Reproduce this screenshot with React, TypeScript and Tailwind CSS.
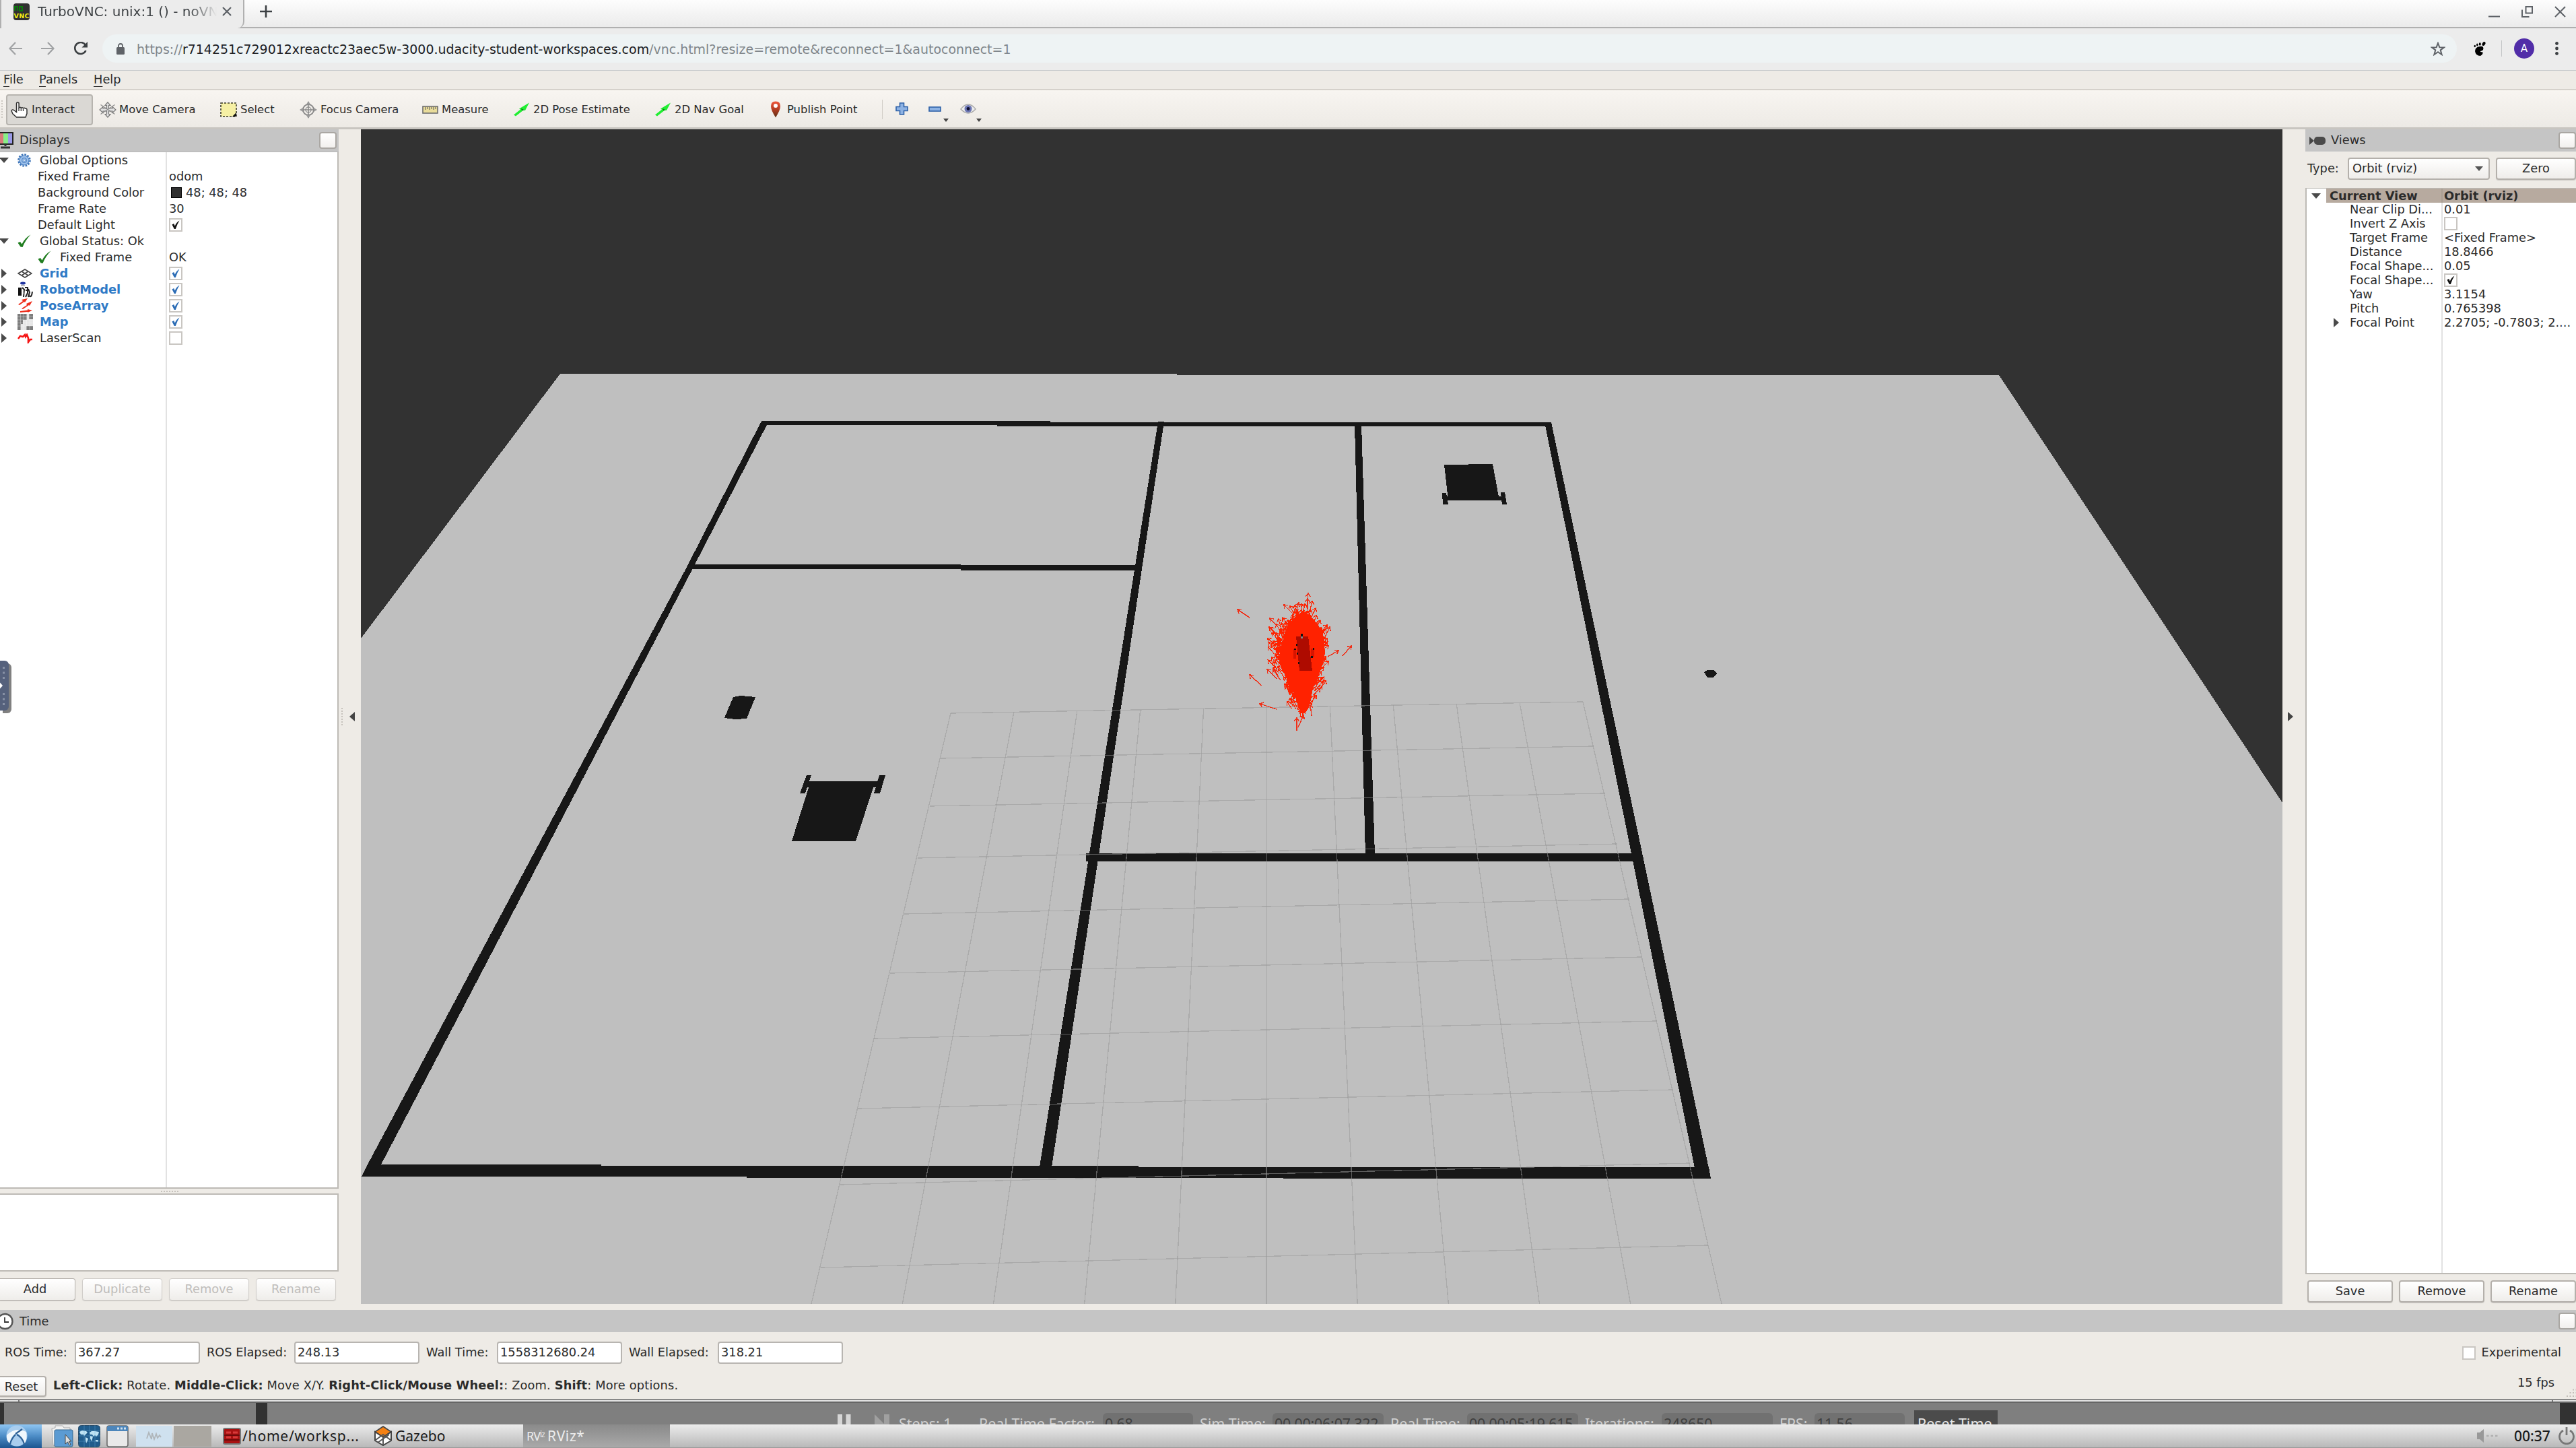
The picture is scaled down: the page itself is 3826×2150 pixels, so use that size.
import React from "react";

const BTN =
  "flex items-center justify-center rounded-[4px] border border-[#b4b0ab] bg-gradient-to-b from-white to-[#efedea] shadow-[0_1px_1px_rgba(0,0,0,0.15)] shrink-0";

/* ---------- small drawings ---------- */

const Check = ({ color = "#111" }: { color?: string }) => (
  <svg width="12" height="14" viewBox="0 0 12 14">
    <path d="M0.5 6.5 L3.2 5 L4.8 8.5 Q7 3 11.5 0.5 Q8 6 5.8 13 L3.8 13 Z" fill={color} />
  </svg>
);

const Box = ({ checked, color }: { checked?: boolean; color?: string }) => (
  <span className="flex h-5 w-5 shrink-0 items-center justify-center border-2 border-[#c9c6c2] bg-white">
    {checked && <Check color={color} />}
  </span>
);

const Down = () => (
  <svg width="14" height="8" viewBox="0 0 14 8">
    <path d="M0 0H14L7 8Z" fill="#4a4a4a" />
  </svg>
);

const Right = () => (
  <svg width="8" height="14" viewBox="0 0 8 14">
    <path d="M0 0L8 7L0 14Z" fill="#4a4a4a" />
  </svg>
);

const GreenCheck = () => (
  <svg width="20" height="20" viewBox="0 0 20 20">
    <path d="M0.5 12.5 L4 11 L6.5 14.5 Q11 5 19.5 0.5 Q12 8 7.5 19 L4.5 18.5 Z" fill="#1f7d1f" />
  </svg>
);

const Gear = () => (
  <svg width="20" height="20" viewBox="0 0 20 20">
    <circle cx="10" cy="10" r="8.6" fill="none" stroke="#3c74b8" strokeWidth="2.4" strokeDasharray="2.7 1.8" />
    <circle cx="10" cy="10" r="7" fill="#9cc0ea" stroke="#4a80c4" strokeWidth="1.2" />
    <circle cx="10" cy="10" r="3.4" fill="none" stroke="#5a8bc8" strokeWidth="1.2" />
    <circle cx="10" cy="10" r="1.6" fill="#dbe8f7" stroke="#5a8bc8" strokeWidth="0.6" />
  </svg>
);

const GridIcon = () => (
  <svg width="22" height="14" viewBox="0 0 22 14">
    <path d="M1 7L11 1L21 7L11 13ZM6 4L16 10M16 4L6 10" fill="none" stroke="#444" strokeWidth="1.6" />
  </svg>
);

const RobotIcon = () => (
  <svg width="24" height="24" viewBox="0 0 24 24">
    <ellipse cx="8" cy="2.5" rx="4" ry="2" fill="#2034a0" />
    <path d="M5 5h6v2H5z" fill="#bbb" />
    <path d="M1 9h5v12H1z" fill="#111" />
    <path d="M7 9l3 3-1 11M11 9h4v8l-3 6M16 11l2 5-2 7M12 13h4M17 21q4 4 5-6" fill="none" stroke="#222" strokeWidth="2" />
    <path d="M8 14h2v5H8z" fill="#888" />
  </svg>
);

const PoseIcon = () => (
  <svg width="23" height="22" viewBox="0 0 23 22">
    <path d="M1 9L8 4L6 2L15 0L11 6L10 5L3 10Z M6 15L14 10L13 8L22 4L18 11L17 10L8 16Z M4 19L15 17.5V16L22 18L15 21V20L4 21Z" fill="#ee2e1c" />
  </svg>
);

const MapIcon = () => (
  <svg width="23" height="24" viewBox="0 0 23 24">
    <path d="M0 0H23V24H0Z" fill="#e6e6e6" />
    <path d="M0 0H14V9H8V15H5V24H0ZM17 0H23V8H17ZM13 18H23V24H13Z" fill="#7d7d7d" />
    <path d="M4.5 0V24M9 0V24M13.500 0V24M18 0V24M0 4.500H23M0 9H23M0 13.500H23M0 18H23" stroke="#fff" strokeOpacity="0.35" />
  </svg>
);

const LaserIcon = () => (
  <svg width="23" height="15" viewBox="0 0 23 15">
    <path d="M1 8L4 4L8 5L11 2L12 5L14 2L16 7V13L19 9H22" fill="none" stroke="#f51414" strokeWidth="2.6" />
  </svg>
);

const HandIcon = () => (
  <svg width="26" height="24" viewBox="0 0 26 24">
    <path d="M8.500 13V3q0-2 1.800-2t1.800 2v6q2-1.500 3.200.3 2-1.500 3.200.4 2-1 3 .4 2.500-.5 2.500 2v5.500l-2 5.400H8.500L3 18l-2-4.500q1-2.500 3.500-1l4 3z" fill="#fff" stroke="#333" strokeWidth="1.500" />
    <path d="M12 9v5M15.300 10v4M18.500 10.500v3.500" stroke="#333" strokeWidth="1.300" />
  </svg>
);

const MoveIcon = () => (
  <svg width="26" height="24" viewBox="0 0 26 24">
    <path d="M13 0.800L17 5.500H14.500V10H20V7.500L25 12L20 16.500V14H14.500V18.500H17L13 23.200L9 18.500H11.500V14H6V16.500L1 12L6 7.500V10H11.500V5.500H9Z" fill="#e2e2e2" stroke="#777" strokeWidth="1.200" />
    <path d="M2.500 4.500L23.500 18.500M23.500 4.500L2.500 18.500" stroke="#8a8a8a" strokeWidth="1.200" />
  </svg>
);

const SelectIcon = () => (
  <svg width="25" height="22" viewBox="0 0 25 22">
    <rect x="1" y="1" width="23" height="20" fill="#f6f0a4" stroke="#3b3b2a" strokeWidth="1.600" strokeDasharray="3 2" />
    <path d="M24 15V21H18Z" fill="#111" />
  </svg>
);

const FocusIcon = () => (
  <svg width="26" height="26" viewBox="0 0 26 26">
    <circle cx="13" cy="13" r="8" fill="none" stroke="#888" strokeWidth="2" />
    <circle cx="13" cy="13" r="4" fill="none" stroke="#999" strokeWidth="1.500" />
    <path d="M13 1V25M1 13H25" stroke="#888" strokeWidth="1.500" />
    <path d="M13 0l3 5h-6zM13 26l3-5h-6zM0 13l5-3v6zM26 13l-5-3v6z" fill="#999" />
  </svg>
);

const RulerIcon = () => (
  <svg width="24" height="12" viewBox="0 0 24 12">
    <rect x="1" y="1" width="22" height="10" fill="#e9dc9a" stroke="#6d6d6d" strokeWidth="1.600" />
    <path d="M5 2v4M8 2v3M11 2v4M14 2v3M17 2v4M20 2v3" stroke="#555" />
  </svg>
);

const GreenArrow = () => (
  <svg width="25" height="21" viewBox="0 0 25 21">
    <path d="M1 18.500L11 10.500L9 9.500L24 0.500L18 12L15.500 11.500L4 20.500Z" fill="#22ee33" />
    <path d="M12 9l5 2.500-4 .5z" fill="#0a7a14" />
  </svg>
);

const PinIcon = () => (
  <svg width="16" height="25" viewBox="0 0 16 25">
    <defs>
      <linearGradient id="pin" x1="0" y1="0" x2="0" y2="1">
        <stop offset="0" stopColor="#f0553a" />
        <stop offset="0.5" stopColor="#b33c22" />
        <stop offset="1" stopColor="#5b2f14" />
      </linearGradient>
    </defs>
    <path d="M8 0.500Q15 0.500 15 7.500Q15 13.500 8 24.500Q1 13.500 1 7.500Q1 0.500 8 0.500Z" fill="url(#pin)" />
    <circle cx="8" cy="7" r="3" fill="#fff" />
  </svg>
);

/* ---------- 3D scene ---------- */

const random = (seed: number) => {
  let s = seed;
  return () => {
    s = (s * 1664525 + 1013904223) % 4294967296;
    return s / 4294967296;
  };
};

const arrow = (x1: number, y1: number, x2: number, y2: number) => {
  const a = Math.atan2(y2 - y1, x2 - x1);
  const h = 6;
  const p = (d: number) =>
    `${(x2 - h * Math.cos(a + d)).toFixed(1)} ${(y2 - h * Math.sin(a + d)).toFixed(1)}`;
  return `M${x1.toFixed(1)} ${y1.toFixed(1)}L${x2.toFixed(1)} ${y2.toFixed(1)}M${p(0.65)}L${x2.toFixed(1)} ${y2.toFixed(1)}L${p(-0.65)}`;
};

const particles = (() => {
  const r = random(29);
  let d = "";
  for (let i = 0; i < 330; i++) {
    const t = r() * Math.PI * 2;
    const k = 0.6 + r() * r() * 0.6;
    const sx = Math.cos(t);
    const sy = Math.sin(t);
    const squeeze = sy > 0 ? 1 - 0.66 * Math.pow(sy, 1.5) : 1 - 0.35 * Math.pow(-sy, 3);
    const x = 1933 + sx * (sx < 0 ? 37 : 32) * k * squeeze;
    const y = 972 + (sy > 0 ? sy * 94 : sy * 66) * k;
    const lean = sx * 0.7 + (r() - 0.5) * 0.6;
    const len = 11 + r() * 9;
    d += arrow(x, y + 6, x + Math.sin(lean) * len, y + 6 - Math.cos(lean) * len);
  }
  return d;
})();

const strays = [
  [1856, 917, 1838, 905],
  [1874, 1018, 1856, 1002],
  [1896, 1053, 1871, 1045],
  [1994, 974, 2007, 959],
  [1897, 1008, 1882, 994],
  [1902, 1010, 1891, 994],
  [1926, 1085, 1926, 1066],
  [1928, 1080, 1936, 1062],
  [1921, 912, 1907, 898],
  [1941, 900, 1943, 881],
  [1942, 905, 1942, 889],
  [1925, 908, 1929, 895],
  [1898, 931, 1886, 918],
  [1900, 945, 1887, 932],
  [1972, 975, 1988, 966],
  [1968, 946, 1975, 931],
  [1950, 1032, 1961, 1022],
  [1948, 1063, 1946, 1046],
]
  .map(([a, b, c, d]) => arrow(a, b, c, d))
  .join("");

const gridLeft = [
  [1412, 1059], [1397, 1126], [1381, 1197], [1363, 1274], [1343, 1357],
  [1322, 1445], [1298, 1542], [1274, 1646], [1248, 1759], [1219, 1882],
];
const gridRight = [
  [2351, 1042], [2367, 1108], [2384, 1178], [2402, 1253], [2420, 1335],
  [2438, 1421], [2461, 1516], [2485, 1618], [2510, 1727], [2537, 1849],
];

const Scene = () => (
  <svg
    className="block shrink-0 bg-[#323232]"
    width="2854"
    height="1744"
    viewBox="536 192 2854 1744"
    shapeRendering="crispEdges"
  >
    <path d="M832 555H1748V557H2969L3390 1192V1936H536V948Z" fill="#bfbfbf" />
    <g fill="#171717">
      <path d="M1131 625H1560V627H2304V633H1481V631H1131Z" />
      <path d="M1130 627H1141L1030 842L565 1731L556 1747H537L546 1729L1020 842Z" />
      <path d="M546 1729H893V1731H1691V1733H2538L2541 1750H1906V1749H1109V1747H537Z" />
      <path d="M2294 627H2304L2541 1749H2520Z" />
      <path d="M1720 626H1729L1562 1733H1544Z" />
      <path d="M2012 630H2022L2042 1270H2028Z" />
      <path d="M1023 838H1427V839H1690V847H1427V845H1023Z" />
      <path d="M1613 1267H2436V1279H1613Z" />
      <path d="M2145 690L2217 689L2227 743H2151Z" />
      <path d="M2142 732H2148L2151 749H2143ZM2229 731H2235L2238 749H2231ZM2145 737H2236V743H2145Z" />
      <path d="M1204 1160H1300L1271 1249H1176Z" />
      <path d="M1198 1151H1205L1196 1178H1188ZM1306 1151H1315L1307 1178H1298ZM1200 1160H1308L1305 1169H1197Z" />
      <path d="M1089 1035L1100 1033L1122 1035L1109 1067L1092 1068L1076 1066Z" />
      <path d="M2531 998L2536 995L2546 995L2550 1000L2545 1006L2536 1006Z" />
    </g>
    <g stroke="#999" strokeOpacity="0.55" strokeWidth="1.3" fill="none">
      {gridLeft.map(([x, y], i) => (
        <path key={i} d={`M${x} ${y}L${gridRight[i][0]} ${gridRight[i][1]}`} />
      ))}
      {Array.from({ length: 11 }, (_, i) => (
        <path key={i} d={`M${1412 + 93.9 * i} ${1059 - 1.7 * i}L${1205 + 135.2 * i} 1936`} />
      ))}
    </g>
    <path
      d="M1935 908L1947 915L1957 927L1965 940L1967 957L1968 970L1964 987L1958 1003L1950 1020L1947 1040L1940 1057L1934 1060L1928 1050L1924 1033L1915 1020L1910 1006L1903 990L1900 976L1904 955L1910 935L1922 917Z"
      fill="#ff2200"
    />
    <path d={particles} stroke="#ff2200" strokeWidth="1.2" fill="none" />
    <path d={strays} stroke="#f03018" strokeWidth="1.4" fill="none" />
    <path d="M1925 945H1943L1949 996H1930Z" fill="#ae0b00" />
    <path d="M1921 964h4v14h-4zM1947 963h5v13h-5z" fill="#d81400" />
    <path d="M1932 941h3v6h-3zM1925 956h2v3h-2zM1926 969h2v3h-2zM1928 983h2v3h-2zM1922 963h3v2h-3zM1950 962h2v3h-2zM1947 974h3v3h-3z" fill="#111" />
    <path d="M1932 945h3v3h-3z" fill="#888" />
  </svg>
);

/* ---------- browser ---------- */

const Browser = () => (
  <header className="shrink-0">
    <div className="flex h-[42px] items-stretch border-b-2 border-[#b0b0b0] bg-gradient-to-b from-[#fdfdfd] to-[#ebebeb]">
      <div className="relative -mb-[2px] flex w-[363px] shrink-0 items-center rounded-br-[10px] border-x-2 border-[#b0b0b0] bg-[#ececec] pl-[18px]">
        <svg width="24" height="25" viewBox="0 0 24 25" className="mb-2">
          <rect width="24" height="25" rx="4" fill="#303030" />
          <path d="M2 11V5H6V11M9 5H13V11H9Z" fill="none" stroke="#0a7a0a" strokeWidth="2" />
          <text x="0.500" y="22" fontFamily="DejaVu Sans" fontWeight="700" fontSize="9.500" fill="#f4f010" textLength="23">VNC</text>
        </svg>
        <span className="mb-2 ml-3 w-[266px] overflow-hidden bg-gradient-to-r from-[#3c4043] from-85% to-transparent bg-clip-text whitespace-nowrap text-[20px] leading-7 text-transparent">
          TurboVNC: unix:1 () - noVNC
        </span>
        <svg width="14" height="14" viewBox="0 0 14 14" className="mb-2 ml-2">
          <path d="M1 1L13 13M13 1L1 13" stroke="#5f6368" strokeWidth="2.200" />
        </svg>
      </div>
      <svg width="18" height="18" viewBox="0 0 18 18" className="mt-[8px] ml-[23px]">
        <path d="M9 0V18M0 9H18" stroke="#3c4043" strokeWidth="2.600" />
      </svg>
      <div className="ml-auto flex items-center gap-[32px] pr-[15px] pb-[6px]">
        <svg width="17" height="17" viewBox="0 0 17 17"><path d="M0 15.500H17" stroke="#5f6368" strokeWidth="2" /></svg>
        <svg width="17" height="17" viewBox="0 0 17 17">
          <path d="M6.500 1H16V10.500H6.500ZM1 5.500V16H11.500" fill="none" stroke="#5f6368" strokeWidth="2" />
        </svg>
        <svg width="17" height="17" viewBox="0 0 17 17"><path d="M1 1L16 16M16 1L1 16" stroke="#5f6368" strokeWidth="2" /></svg>
      </div>
    </div>
    <div className="flex h-[63px] items-center border-b border-[#c6c9cb] bg-[#ececec] pb-[2px]">
      <svg width="20" height="20" viewBox="0 0 20 20" className="ml-[13px]">
        <path d="M20 10H2M10 1L1.500 10L10 19" fill="none" stroke="#a0a2a4" strokeWidth="2.200" />
      </svg>
      <svg width="20" height="20" viewBox="0 0 20 20" className="ml-[28px]">
        <path d="M0 10H18M10 1L18.500 10L10 19" fill="none" stroke="#a0a2a4" strokeWidth="2.200" />
      </svg>
      <svg width="22" height="20" viewBox="0 0 22 20" className="ml-[28px]">
        <path d="M18 5A8.500 8.500 0 1 0 18.500 13" fill="none" stroke="#3c4043" strokeWidth="2.600" />
        <path d="M21 0V8.500H12.500Z" fill="#3c4043" />
      </svg>
      <div className="ml-[21px] flex h-[42px] w-[3497px] items-center rounded-full bg-[#eef3f4] pr-[17px] pl-[21px]">
        <svg width="12" height="17" viewBox="0 0 12 17">
          <rect y="6" width="12" height="11" rx="1.500" fill="#5f6368" />
          <path d="M3 7V4a3 3 0 0 1 6 0V7" fill="none" stroke="#5f6368" strokeWidth="1.800" />
        </svg>
        <span className="mt-[2px] ml-[18px] text-[18.97px] leading-6 whitespace-nowrap text-[#80868b]">
          https://<span className="text-[#202124]">r714251c729012xreactc23aec5w-3000.udacity-student-workspaces.com</span>/vnc.html?resize=remote&amp;reconnect=1&amp;autoconnect=1
        </span>
        <svg width="22" height="21" viewBox="0 0 22 21" className="ml-auto">
          <path d="M11 2L13.300 8.200L20 8.400L14.700 12.400L16.600 19L11 15.200L5.400 19L7.300 12.400L2 8.400L8.700 8.200Z" fill="none" stroke="#5f6368" strokeWidth="2" />
        </svg>
      </div>
      <svg width="18" height="21" viewBox="0 0 18 21" className="ml-[25px]">
        <path d="M14 8Q16 13 10 14Q10 16 13 15Q15 18 10 21Q3 21 2 14Q2 8 9 7Q13 6 14 8Z" fill="#000" />
        <ellipse cx="15" cy="3" rx="2.200" ry="3.200" transform="rotate(30 15 3)" />
        <ellipse cx="9.300" cy="3.400" rx="1.500" ry="2.200" />
        <ellipse cx="5.300" cy="4.500" rx="1.200" ry="2" />
        <ellipse cx="1.800" cy="6.500" rx="1.200" ry="1.800" />
      </svg>
      <div className="ml-[23px] h-6 w-px bg-[#c4c6c8]" />
      <div className="ml-[18px] flex h-[30px] w-[30px] items-center justify-center rounded-full bg-[#512da8] font-['Roboto'] text-[16px] text-white">A</div>
      <svg width="5" height="20" viewBox="0 0 5 20" className="ml-[31px]">
        <circle cx="2.500" cy="2.500" r="2.400" fill="#3c4043" />
        <circle cx="2.500" cy="10" r="2.400" fill="#3c4043" />
        <circle cx="2.500" cy="17.500" r="2.400" fill="#3c4043" />
      </svg>
    </div>
  </header>
);

/* ---------- RViz window ---------- */

const MenuBar = () => (
  <nav className="flex h-[29px] shrink-0 items-start border-b-2 border-[#d5d1cb] pt-[2px] pl-[5px] text-[17.8px] leading-[22px]">
    {[["F", "ile", "w-[53px]"], ["P", "anels", "w-[81px]"], ["H", "elp", "w-[60px]"]].map(([a, b, w]) => (
      <span key={a} className={w}>
        <u className="underline-offset-4">{a}</u>{b}
      </span>
    ))}
  </nav>
);

const tools: { icon: React.ReactNode; label: string; w: string; tw: string }[] = [
  { icon: <MoveIcon />, label: "Move Camera", w: "w-[180px]", tw: "w-[30px]" },
  { icon: <SelectIcon />, label: "Select", w: "w-[118px]", tw: "w-[30px]" },
  { icon: <FocusIcon />, label: "Focus Camera", w: "w-[182px]", tw: "w-[31px]" },
  { icon: <RulerIcon />, label: "Measure", w: "w-[135px]", tw: "w-[29px]" },
  { icon: <GreenArrow />, label: "2D Pose Estimate", w: "w-[210px]", tw: "w-[30px]" },
  { icon: <GreenArrow />, label: "2D Nav Goal", w: "w-[172px]", tw: "w-[30px]" },
  { icon: <PinIcon />, label: "Publish Point", w: "w-[166px]", tw: "w-[25px]" },
];

const MiniDown = () => (
  <svg width="8" height="5" viewBox="0 0 8 5" className="mt-[31px]">
    <path d="M0 0H8L4 5Z" fill="#444" />
  </svg>
);

const ToolBar = () => (
  <div className="flex h-[58px] shrink-0 items-start border-b-[3px] border-[#c8c5c0] bg-gradient-to-b from-[#f8f5f1] to-[#edeae5] text-[16.4px]">
    <div className="mt-[15px] ml-[2px] h-[26px] border-l-2 border-dotted border-[#ccc8c2]" />
    <div className="mt-[6px] ml-[5px] mr-[9px] flex h-[46px] w-[129px] items-center rounded-[4px] border-2 border-[#b7b4af] bg-[#dad8d4] pl-[5px]">
      <HandIcon />
      <span className="ml-[5px]">Interact</span>
    </div>
    {tools.map((t) => (
      <div key={t.label} className={`flex h-[57px] shrink-0 items-center whitespace-nowrap ${t.w}`}>
        <span className={`shrink-0 ${t.tw}`}>{t.icon}</span>
        {t.label}
      </div>
    ))}
    <div className="mt-[14px] h-[29px] w-px bg-[#d0ccc6]" />
    <svg width="19" height="19" viewBox="0 0 19 19" className="mt-[18px] ml-[19px]">
      <path d="M6.500 1H12.500V6.500H18V12.500H12.500V18H6.500V12.500H1V6.500H6.500Z" fill="#8db2e3" stroke="#2f62a8" strokeWidth="1.600" />
    </svg>
    <svg width="19" height="8" viewBox="0 0 19 8" className="mt-[24px] ml-[30px]">
      <rect x="1" y="1" width="17" height="6" fill="#8db2e3" stroke="#2f62a8" strokeWidth="1.600" />
    </svg>
    <div className="mt-[11px] ml-[3px]"><MiniDown /></div>
    <svg width="24" height="16" viewBox="0 0 24 16" className="mt-[20px] ml-[17px]">
      <path d="M1 8Q12 -6 23 8Q12 20 1 8Z" fill="#eee" stroke="#aaa" strokeWidth="1.500" />
      <circle cx="12" cy="7.500" r="5.500" fill="#6c76b4" />
      <circle cx="12" cy="7.500" r="2.400" fill="#0c0c2c" />
    </svg>
    <div className="mt-[11px]"><MiniDown /></div>
  </div>
);

const FloatBtn = () => (
  <div className="h-[25px] w-[26px] shrink-0 rounded-[4px] border-2 border-[#aaa7a3] bg-gradient-to-b from-white to-[#f2f0ee]" />
);

type Row = {
  open?: boolean;
  closed?: boolean;
  icon?: React.ReactNode;
  indent: string;
  label: string;
  bold?: boolean;
  value?: React.ReactNode;
};

const blue = <Box checked color="#2b6cb5" />;
const rows: Row[] = [
  { open: true, icon: <Gear />, indent: "w-[33px]", label: "Global Options" },
  { indent: "w-[30px]", label: "Fixed Frame", value: "odom" },
  {
    indent: "w-[30px]",
    label: "Background Color",
    value: (
      <span className="flex items-center">
        <span className="mr-[6px] ml-[3px] h-4 w-4 border border-black bg-[#303030]" />48; 48; 48
      </span>
    ),
  },
  { indent: "w-[30px]", label: "Frame Rate", value: "30" },
  { indent: "w-[30px]", label: "Default Light", value: <Box checked /> },
  { open: true, icon: <GreenCheck />, indent: "w-[33px]", label: "Global Status: Ok" },
  { icon: <span className="block pl-[30px]"><GreenCheck /></span>, indent: "w-[63px]", label: "Fixed Frame", value: "OK" },
  { closed: true, icon: <GridIcon />, indent: "w-[33px]", label: "Grid", bold: true, value: blue },
  { closed: true, icon: <RobotIcon />, indent: "w-[33px]", label: "RobotModel", bold: true, value: blue },
  { closed: true, icon: <PoseIcon />, indent: "w-[33px]", label: "PoseArray", bold: true, value: blue },
  { closed: true, icon: <MapIcon />, indent: "w-[33px]", label: "Map", bold: true, value: blue },
  { closed: true, icon: <LaserIcon />, indent: "w-[33px]", label: "LaserScan", value: <Box /> },
];

const Displays = () => (
  <aside className="flex w-[503px] shrink-0 flex-col">
    <div className="flex h-[34px] items-center border-b border-[#b8b8b8] bg-[#c5c5c5] pr-[3px]">
      <svg width="20" height="25" viewBox="0 0 20 25">
        <path d="M0 1H19V18H0" fill="#8e8" stroke="#222" strokeWidth="2" />
        <path d="M0 2H5V17H0Z" fill="#d87a7a" />
        <path d="M12 2H18V17H12Z" fill="#9a9ae8" />
        <path d="M8 18v3M1 23h14" stroke="#333" strokeWidth="3" />
      </svg>
      <span className="ml-[9px] flex-1 pb-px">Displays</span>
      <FloatBtn />
    </div>
    <div className="flex h-[1539px] border-r-2 border-b-2 border-[#bdbab5] bg-white">
      <div className="w-[248px] shrink-0 border-r-2 border-[#e2e2e2]">
        {rows.map((r, i) => (
          <div key={i} className="flex h-6 items-center whitespace-nowrap">
            <span className="w-[26px] shrink-0 overflow-hidden">
              {r.open && <span className="-ml-px block"><Down /></span>}
              {r.closed && <span className="block pl-[2px]"><Right /></span>}
            </span>
            <span className={`shrink-0 ${r.indent}`}>{r.icon}</span>
            <span className={r.bold ? "font-bold text-[#2f7ac6]" : ""}>{r.label}</span>
          </div>
        ))}
      </div>
      <div className="pl-[3px]">
        {rows.map((r, i) => (
          <div key={i} className="flex h-6 items-center whitespace-nowrap">{r.value}</div>
        ))}
      </div>
    </div>
    <div className="flex h-[7px] items-center justify-center">
      <div className="w-[26px] border-t-2 border-dotted border-[#c6c2bc]" />
    </div>
    <div className="h-[116px] border-y-2 border-r-2 border-[#bdbab5] bg-white" />
    <div className="mt-[10px] flex gap-[10px]">
      <div className={`${BTN} h-[33px] w-[112px] rounded-l-none border-l-0 pr-[7px] pb-[2px]`}>Add</div>
      {["Duplicate", "Remove", "Rename"].map((t) => (
        <div key={t} className={`${BTN} h-[33px] w-[119px] border-[#d0cdc9] pb-[2px] text-[#bfbdbb]`}>{t}</div>
      ))}
    </div>
  </aside>
);

const Splitter = ({ dir }: { dir: "left" | "right" }) => (
  <div className={`flex shrink-0 items-center ${dir === "left" ? "w-[33px] pl-[4px]" : "w-[34px] pl-[8px]"}`}>
    {dir === "left" && <div className="mr-[10px] h-[26px] border-l-2 border-dotted border-[#c6c2bc]" />}
    <svg width="8" height="14" viewBox="0 0 8 14">
      <path d={dir === "left" ? "M8 0V14L0 7Z" : "M0 0V14L8 7Z"} fill="#444" />
    </svg>
  </div>
);

const viewRows: [string, React.ReactNode][] = [
  ["Near Clip Di...", "0.01"],
  ["Invert Z Axis", <Box />],
  ["Target Frame", "<Fixed Frame>"],
  ["Distance", "18.8466"],
  ["Focal Shape...", "0.05"],
  ["Focal Shape...", <Box checked />],
  ["Yaw", "3.1154"],
  ["Pitch", "0.765398"],
  ["Focal Point", "2.2705; -0.7803; 2...."],
];

const Views = () => (
  <aside className="flex w-[402px] shrink-0 flex-col overflow-hidden">
    <div className="flex h-[33px] shrink-0 items-center bg-[#c5c5c5] pl-[6px]">
      <svg width="24" height="14" viewBox="0 0 24 14">
        <path d="M0 1L7 7L0 13Z" fill="#444" />
        <rect x="7" y="1" width="17" height="12" rx="5" fill="#4a4a4a" />
      </svg>
      <span className="ml-[8px] flex-1 pb-px">Views</span>
      <FloatBtn />
    </div>
    <div className="mt-[9px] flex shrink-0 items-center pl-[3px]">
      <span className="w-[60px] pb-px">Type:</span>
      <div className="flex h-[33px] w-[211px] shrink-0 items-center justify-between rounded-[4px] border-2 border-[#b4b0ab] bg-gradient-to-b from-white to-[#efedea] pr-[8px] pb-px pl-[5px]">
        Orbit (rviz)
        <svg width="12" height="7" viewBox="0 0 12 7"><path d="M0 0H12L6 7Z" fill="#555" /></svg>
      </div>
      <div className={`${BTN} ml-[9px] h-[33px] w-[119px] border-2 pb-px`}>Zero</div>
    </div>
    <div className="mt-[12px] flex h-[1613px] shrink-0 border-2 border-t border-r-0 border-[#bdbab5] bg-white">
      <div className="w-[202px] shrink-0 border-r-2 border-[#e2e2e2]">
        <div className="flex h-[21px] font-bold">
          <span className="flex w-[29px] items-center pl-[7px]"><Down /></span>
          <span className="-mr-[2px] flex flex-1 items-center border-r-2 border-[#aa9f94] bg-[#b7aa9f] pl-[5px]">Current View</span>
        </div>
        {viewRows.map(([l], i) => (
          <div key={i} className="flex h-[21px] items-center pb-px whitespace-nowrap">
            <span className="w-[64px] shrink-0 pl-[40px]">{i === 8 && <Right />}</span>
            {l}
          </div>
        ))}
      </div>
      <div className="flex-1">
        <div className="flex h-[21px] items-center bg-[#b7aa9f] pl-[2px] font-bold">Orbit (rviz)</div>
        {viewRows.map(([, v], i) => (
          <div key={i} className="flex h-[21px] items-center pb-px pl-[2px] whitespace-nowrap">{v}</div>
        ))}
      </div>
    </div>
    <div className="mt-[9px] flex gap-[9px] pl-[3px]">
      {["Save", "Remove", "Rename"].map((t) => (
        <div key={t} className={`${BTN} h-[33px] w-[127px] border-2 pb-px`}>{t}</div>
      ))}
    </div>
  </aside>
);

const times = [
  ["ROS Time:", "367.27", "w-[104px]"],
  ["ROS Elapsed:", "248.13", "w-[130px]"],
  ["Wall Time:", "1558312680.24", "w-[105px]"],
  ["Wall Elapsed:", "318.21", "w-[132px]"],
];

const TimePanel = () => (
  <section className="shrink-0">
    <div className="mt-[9px] flex h-[33px] items-center bg-[#c5c5c5]">
      <svg width="20" height="26" viewBox="0 0 20 26">
        <ellipse cx="7.500" cy="13" rx="11" ry="11" fill="#fff" stroke="#555" strokeWidth="2.400" />
        <path d="M7 7V14H13" fill="none" stroke="#333" strokeWidth="1.800" />
      </svg>
      <span className="ml-[9px] flex-1">Time</span>
      <FloatBtn />
    </div>
    <div className="mt-[14px] flex h-[33px] items-center gap-[10px] pl-[7px]">
      {times.map(([l, v, w]) => (
        <div key={l} className="flex items-center whitespace-nowrap">
          <span className={`pb-px ${w}`}>{l}</span>
          <div className="flex h-[33px] w-[186px] items-center rounded-[4px] border-2 border-[#b8b5b1] bg-white pb-px pl-[3px]">{v}</div>
        </div>
      ))}
      <div className="mr-[22px] ml-auto flex items-center gap-[8px]">
        <Box />
        <span className="pb-px">Experimental</span>
      </div>
    </div>
    <div className="mt-[18px] flex h-[34px] items-start">
      <div className={`${BTN} h-[31px] w-[69px] rounded-l-none border-2 border-l-0 pr-[4px]`}>Reset</div>
      <p className="ml-[10px] leading-[28px] tracking-[0.16px] whitespace-nowrap">
        <b>Left-Click:</b> Rotate. <b>Middle-Click:</b> Move X/Y. <b>Right-Click/Mouse Wheel:</b>: Zoom. <b>Shift</b>: More options.
      </p>
      <span className="mr-[18px] ml-auto leading-[20px]">15 fps</span>
      <svg width="14" height="16" viewBox="0 0 14 16" className="mt-[16px]">
        <path d="M0 14h14M4.500 9h10M9 4.500h5" stroke="#c2beb8" strokeWidth="2" strokeDasharray="2 2.500" />
      </svg>
    </div>
  </section>
);

/* ---------- Gazebo strip and desktop bar ---------- */

const fields = [
  { label: "Real Time Factor:", value: "0.68", lw: "w-[184px]", fw: "w-[134px]" },
  { label: "Sim Time:", value: "00 00:06:07.322", lw: "w-[108px]", fw: "w-[165px]" },
  { label: "Real Time:", value: "00 00:05:19.615", lw: "w-[114px]", fw: "w-[165px]" },
  { label: "Iterations:", value: "248650", lw: "w-[114px]", fw: "w-[165px]" },
  { label: "FPS:", value: "11.56", lw: "w-[52px]", fw: "w-[134px]" },
];

const GazeboStrip = () => (
  <div className="flex h-[38px] shrink-0 flex-col overflow-hidden">
    <div className="flex h-[6px] shrink-0 border-t-2 border-b-2 border-t-[#888] border-b-[#666] bg-[#e4e4e4]">
      <div className="ml-[27px] w-[2px] bg-[#777]" />
      <div className="mr-[34px] ml-auto w-[2px] bg-[#777]" />
    </div>
    <div className="flex h-8 items-start overflow-hidden bg-[#7f7f7f] font-['Noto_Sans',sans-serif] text-[21.4px] leading-[26px] whitespace-nowrap text-[#cfcfcf]">
      <div className="h-8 w-[6px] shrink-0 bg-[#323232]" />
      <div className="ml-[374px] h-8 w-[17px] shrink-0 bg-[#323232]" />
      <svg width="20" height="20" viewBox="0 0 20 20" className="mt-[17px] ml-[847px] shrink-0">
        <path d="M0 0h7v20H0zM12.500 0h7v20h-7z" fill="#d6d6d6" />
      </svg>
      <svg width="22" height="20" viewBox="0 0 22 20" className="mt-[17px] ml-[35px] shrink-0">
        <path d="M0 0L14 14V0h8v20H14L0 26z" fill="#a0a0a0" />
      </svg>
      <span className="mt-[18px] ml-[14px] w-[119px] shrink-0">Steps: 1</span>
      {fields.map((f) => (
        <React.Fragment key={f.label}>
          <span className={`mt-[18px] shrink-0 ${f.lw}`}>{f.label}</span>
          <span className={`mt-[15px] mr-[10px] h-10 shrink-0 rounded-[6px] bg-[#717171] pt-[3px] pl-[3px] tracking-[-0.2px] text-[#404040] ${f.fw}`}>{f.value}</span>
        </React.Fragment>
      ))}
      <div className="mt-[11px] ml-[4px] h-10 w-[124px] shrink-0 bg-[#4b4b4b] pt-[7px] pl-[5px] text-[#e6e6e6]">Reset Time</div>
      <div className="ml-auto h-8 w-6 shrink-0 bg-[#323232]" />
    </div>
  </div>
);

const TaskBar = () => (
  <footer className="flex h-[35px] shrink-0 items-center border-b border-[#999] bg-gradient-to-b from-[#ececec] to-[#b9b9b9] font-['Noto_Sans',sans-serif] text-[21px] leading-8 whitespace-nowrap text-[#1c1c1c]">
    <div className="flex h-[35px] w-[62px] items-center bg-gradient-to-b from-[#8fc6f3] via-[#4c8cc6] to-[#1c5590] pl-[9px]">
      <svg width="32" height="32" viewBox="0 0 32 32">
        <circle cx="16" cy="16" r="15.500" fill="#a9cdee" />
        <path d="M1 15Q14 2 30 10Q32 22 27 28Q22 13 16 12Q8 14 5 27Q0 22 1 15Z" fill="#f1f7fc" />
        <path d="M14 14Q8 20 6 28M16 14Q24 18 27 28M14 13L24 6" fill="none" stroke="#2c5f95" strokeWidth="2.200" />
      </svg>
    </div>
    <svg width="33" height="33" viewBox="0 0 33 33" className="ml-[14px]">
      <path d="M1 5L6 4V1H17L19 4H28V30H3Z" fill="#f2f2f2" stroke="#aaa" />
      <rect x="5" y="7" width="27" height="25" rx="2" fill="#5b9bd3" stroke="#33668f" />
      <path d="M21 14V28L24.500 25L27 30L29 29L26.500 24H30Z" fill="#ddd" stroke="#444" />
    </svg>
    <svg width="33" height="33" viewBox="0 0 33 33" className="ml-[7px]">
      <rect x="0.500" y="0.500" width="32" height="32" rx="4" fill="#1f5c8c" stroke="#2c4d68" />
      <path d="M2 10L6 8L12 9L14 11L11 14L9 16L8 14L4 14ZM11 18L15 20L14 23L12 27L11 22ZM17 11L20 9L25 9L31 10L30 14L27 17L25 15L23 17L21 14L18 14ZM18 16L22 17L21 21L20 24L18 20ZM26 22L30 22L29 25L26 24Z" fill="#bfe3f3" />
      <path d="M0 8H33M0 16H33M0 24H33M9 0V33M17 0V33M25 0V33" stroke="#6fb2d8" strokeOpacity="0.4" />
    </svg>
    <svg width="33" height="33" viewBox="0 0 33 33" className="ml-[9px]">
      <rect x="1" y="1" width="31" height="31" rx="3" fill="#e9e9e9" stroke="#6a6a6a" strokeWidth="1.600" />
      <path d="M1 4Q1 1 4 1H29Q32 1 32 4V9H1Z" fill="#4d86bb" />
      <path d="M16 5h3M21 5h3M26 5h3" stroke="#cfe2f2" strokeWidth="3" />
    </svg>
    <div className="ml-[11px] flex h-[31px] w-[54px] items-center justify-center bg-[#cfe1ef]">
      <svg width="24" height="14" viewBox="0 0 24 14"><path d="M1 11L4 2L8 12L9 3L12 12L15 4L17 10L20 6L22 9" fill="none" stroke="#b0b6ba" strokeWidth="1.800" /></svg>
    </div>
    <div className="ml-[2px] h-[31px] w-[56px] bg-[#aaa7a1]" />
    <svg width="27" height="25" viewBox="0 0 27 25" className="ml-[17px]">
      <rect x="1" y="1" width="25" height="23" rx="2" fill="#a81212" stroke="#777" strokeWidth="2" />
      <path d="M5 7H12M15 7H22M5 14H12M15 14H22" stroke="#d83a3a" strokeWidth="3" />
      <path d="M2 11h23M2 18h23" stroke="#5e0808" strokeWidth="1.500" />
    </svg>
    <span className="ml-[2px] w-[194px] tracking-[0.8px]">/home/worksp...</span>
    <svg width="31" height="30" viewBox="0 0 31 30">
      <path d="M15 1L27 9L15 17L3 9Z" fill="#f58113" stroke="#444" strokeWidth="1.600" />
      <path d="M3 9L15 17V29L3 22ZM27 9V22L15 29V17Z" fill="#fff" stroke="#444" strokeWidth="2" />
      <path d="M4 21L15 13L26 21M15 17V29M7 25L24 13" fill="none" stroke="#555" strokeWidth="2" />
    </svg>
    <span className="ml-[2px] w-[190px]">Gazebo</span>
    <div className="flex h-[34px] w-[218px] items-center bg-gradient-to-b from-[#8a8a8a] to-[#a9a9a9] pl-[5px] tracking-[0.6px] text-[#ececec]">
      <span className="flex w-[31px] items-start text-[18px] leading-[18px] tracking-[-1px]">RV<span className="text-[12px] leading-[14px]">iz</span></span>
      RViz*
    </div>
    <svg width="32" height="20" viewBox="0 0 32 20" className="ml-auto">
      <path d="M0 5H4L10 0V20L4 15H0Z" fill="#999" />
      <path d="M14 10H31" stroke="#b0b0b0" strokeWidth="2.500" strokeDasharray="3.500 3" />
    </svg>
    <span className="ml-[23px] w-[66px] font-medium">00:37</span>
    <svg width="25" height="26" viewBox="0 0 25 26">
      <path d="M7 5A10.500 10.500 0 1 0 17 5" fill="none" stroke="#777" strokeWidth="2.800" />
      <path d="M12 0V12" stroke="#777" strokeWidth="2.800" />
    </svg>
    <span className="w-[1px]" />
  </footer>
);

const VncHandle = () => (
  <div className="absolute top-[981px] left-0 flex h-[74px] w-[13px] items-center rounded-r-[6px] bg-[#55617c] shadow-[4px_4px_0_#808080]">
    <svg width="13" height="60" viewBox="0 0 13 60">
      <path d="M0 25.500L4 30L0 34.500Z" fill="#fff" />
      <path d="M4 2h3v3h-3zM4 9.500h3v3h-3zM4 17h3v3h-3zM4 41h3v3h-3zM4 48.500h3v3h-3zM4 56h3v3h-3z" fill="#8791a5" />
    </svg>
  </div>
);

export default function App() {
  return (
    <div className="relative flex h-[2150px] w-[3826px] flex-col overflow-hidden bg-[#eeebe6] font-['DejaVu_Sans',sans-serif] text-[17.8px] leading-5 text-[#2b2b2b]">
      <Browser />
      <MenuBar />
      <ToolBar />
      <main className="flex h-[1744px] shrink-0">
        <Displays />
        <Splitter dir="left" />
        <Scene />
        <Splitter dir="right" />
        <Views />
      </main>
      <TimePanel />
      <GazeboStrip />
      <TaskBar />
      <VncHandle />
    </div>
  );
}
